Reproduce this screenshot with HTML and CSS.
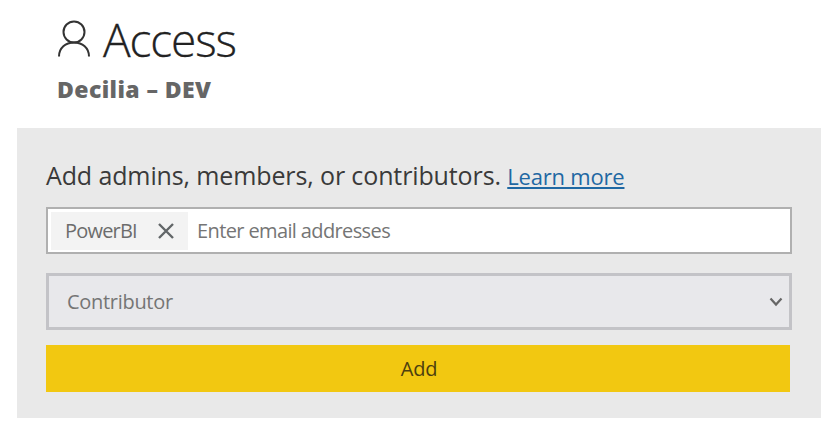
FILE: index.html
```html
<!DOCTYPE html>
<html lang="en">
<head>
  <meta charset="UTF-8">
  <title>Access</title>
  <link rel="stylesheet" href="styles.css">
</head>
<body>
  <header>
    <h1>
      <svg class="user-icon" width="34" height="38" viewBox="0 0 34 38">
        <circle cx="17" cy="12" r="10.5"/>
        <path d="M2 36.500C2 28 8.500 22.500 17 22.500S32 28 32 36.500"/>
      </svg>
      <span>Access</span>
    </h1>
    <h2>Decilia – DEV</h2>
  </header>

  <form class="panel">
    <p class="intro">Add admins, members, or contributors. <a href="#">Learn more</a></p>
    <div class="email-box">
      <div class="tag">
        <span>PowerBI</span>
        <svg class="remove" width="16" height="16" viewBox="0 0 16 16"><path d="M1 1L15 15M15 1L1 15"/></svg>
      </div>
      <input type="text" placeholder="Enter email addresses">
    </div>
    <div class="role">
      <span>Contributor</span>
      <svg class="chevron" width="14" height="10" viewBox="0 0 14 10"><path d="M1.500 1.500L7 7.500L12.500 1.500"/></svg>
    </div>
    <button type="button">Add</button>
  </form>
</body>
</html>
```

FILE: styles.css
```css
* {
  box-sizing: border-box;
}
body {
  margin: 0;
  background: #fff;
  font-family: "Segoe UI", "Open Sans", "Noto Sans", sans-serif;
  color: #3a3a3a;
}
header {
  height: 128px;
  padding: 14px 0 0 57px;
}
h1 {
  display: flex;
  align-items: center;
  gap: 12px;
  height: 50px;
  margin: 0;
  font-size: 46px;
  font-weight: 300;
  line-height: 50px;
  letter-spacing: -1.1px;
  color: #222;
  -webkit-text-stroke: 0.3px #222;
}
svg {
  flex: none;
  fill: none;
}
.user-icon {
  stroke: #333;
  stroke-width: 2;
}
h2 {
  margin: 9px 0 0;
  font-size: 23px;
  font-weight: 800;
  line-height: 32px;
  letter-spacing: 0.4px;
  color: #666;
}
.panel {
  width: 804px;
  height: 290px;
  margin-left: 17px;
  padding: 29px 29px 0 29px;
  background: #e9e9e9;
}
.intro {
  height: 36px;
  margin: 0 0 14px;
  font-size: 25px;
  line-height: 36px;
  letter-spacing: -0.12px;
  white-space: nowrap;
}
.intro a {
  font-size: 22px;
  letter-spacing: -0.2px;
  color: #1f68a3;
}
.email-box {
  display: flex;
  align-items: center;
  height: 47px;
  padding: 0 3px;
  background: #fff;
  border: 2px solid #b0b0b0;
}
.tag {
  display: flex;
  align-items: center;
  justify-content: space-between;
  width: 137px;
  height: 38px;
  padding: 0 14px 0 14px;
  background: #f3f3f3;
  color: #6c6c6c;
  font-size: 20px;
  letter-spacing: -0.8px;
}
.remove {
  stroke: #626668;
  stroke-width: 2.4;
}
input {
  flex: 1;
  padding: 0 0 0 9px;
  border: 0;
  outline: 0;
  font: inherit;
  font-size: 20px;
  letter-spacing: -0.62px;
}
input::placeholder {
  color: #757575;
}
.role {
  display: flex;
  align-items: center;
  justify-content: space-between;
  height: 57px;
  margin-top: 19px;
  padding: 0 6px 0 18px;
  background: #e8e8eb;
  border: 3px solid #c3c3c7;
  color: #757575;
  font-size: 20px;
  letter-spacing: -0.3px;
}
.chevron {
  stroke: #666;
  stroke-width: 2.2;
}
button {
  display: block;
  width: 744px;
  height: 47px;
  margin-top: 15px;
  padding: 0 0 0 2px;
  border: 0;
  background: #f2c811;
  color: #4d400f;
  font: inherit;
  font-size: 20px;
  letter-spacing: -0.2px;
}
```
